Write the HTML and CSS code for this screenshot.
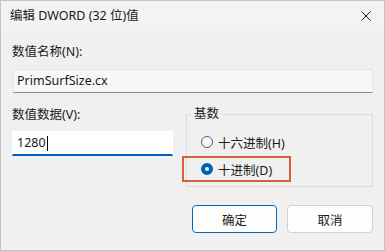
FILE: index.html
```html
<!DOCTYPE html>
<html lang="zh-CN">
<head>
    <meta charset="UTF-8">
    <title>编辑 DWORD (32 位)值</title>
    <link rel="stylesheet" href="styles.css">
</head>
<body>
    <div class="dialog">
        <div class="titlebar">
            <span class="title">编辑 DWORD (32 位)值</span>
            <svg class="close" width="10" height="10" viewBox="0 0 10 10">
                <path d="M0.5 0.5 L9.5 9.5 M9.5 0.5 L0.5 9.5" stroke="#1a1a1a" stroke-width="1" fill="none"/>
            </svg>
        </div>

        <div class="content">
            <!-- Value name -->
            <div class="label label-name">数值名称(N):</div>
            <div class="field field-readonly">PrimSurfSize.cx</div>

            <div class="row">
                <!-- Value data -->
                <div class="col-data">
                    <div class="label">数值数据(V):</div>
                    <div class="field field-edit">1280<span class="caret"></span></div>
                </div>

                <!-- Base -->
                <fieldset class="base">
                    <legend>基数</legend>
                    <div class="radio"><span class="dot"></span>十六进制(H)</div>
                    <div class="radio radio-on highlight"><span class="dot"></span>十进制(D)</div>
                </fieldset>
            </div>

            <div class="actions">
                <button class="btn btn-primary">确定</button>
                <button class="btn">取消</button>
            </div>
        </div>
    </div>
</body>
</html>
```

FILE: styles.css
```css
* {
    box-sizing: border-box;
}

body {
    margin: 0;
    font-family: "Noto Sans", "Noto Sans CJK SC", sans-serif;
    font-size: 12.5px;
    color: #1a1a1a;
}

.dialog {
    width: 385px;
    height: 251px;
    background-color: #f0f0f0;
    border: 1px solid #c4c4c4;
}

.titlebar {
    height: 30px;
    display: flex;
    align-items: center;
    justify-content: space-between;
    padding: 0 13px 0 9px;
    background-color: #f3f3f3;
}

.title {
    line-height: 16px;
}

.content {
    padding: 0 11px;
}

.label {
    line-height: 16px;
}

.label-name {
    margin-top: 13px;
}

.field {
    height: 24px;
    line-height: 22px;
    padding-left: 3px;
    border: 1px solid #e3e3e3;
}

.field-readonly {
    margin: 9px 0 0 1px;
    width: 360px;
    background-color: #f7f7f7;
    border-bottom-color: #8a8a8a;
}

.row {
    display: flex;
    gap: 13px;
    margin-top: 13px;
}

.col-data {
    width: 161px;
    padding-top: 1px;
}

.field-edit {
    margin-top: 8px;
    height: 25px;
    padding-left: 4px;
    background-color: #ffffff;
    border-color: #ffffff;
    border-bottom: 2px solid #005fb8;
    display: flex;
    align-items: center;
}

.caret {
    display: inline-block;
    width: 1px;
    height: 15px;
    background-color: #000;
    margin-left: 1px;
}

.base {
    width: 187px;
    height: 81px;
    margin: 0;
    padding: 0 0 4px 0;
    border: 1px solid #dcdcdc;
}

.base legend {
    margin-left: 4px;
    padding: 0 3px;
    line-height: 16px;
}

.radio {
    display: flex;
    align-items: center;
    height: 20px;
    margin-top: 10px;
    padding-left: 14px;
}

.dot {
    width: 12px;
    height: 12px;
    border-radius: 50%;
    border: 1px solid #5d5d5d;
    background-color: #f7f7f7;
    margin-right: 5px;
}

.radio-on .dot {
    border: 4px solid #005fb8;
    background-color: #ffffff;
}

.highlight {
    width: 109px;
    height: 26px;
    margin: 4px 0 0 -5px;
    padding-left: 17px;
    border: 2px solid #d5613b;
}

.actions {
    display: flex;
    justify-content: flex-end;
    gap: 10px;
    margin-top: 18px;
}

.btn {
    height: 28px;
    width: 86px;
    font-family: inherit;
    font-size: 12.5px;
    color: #1a1a1a;
    background-color: #fdfdfd;
    border: 1px solid #d0d0d0;
    border-radius: 4px;
}

.btn-primary {
    width: 85px;
    border-color: #0067c0;
}
```
